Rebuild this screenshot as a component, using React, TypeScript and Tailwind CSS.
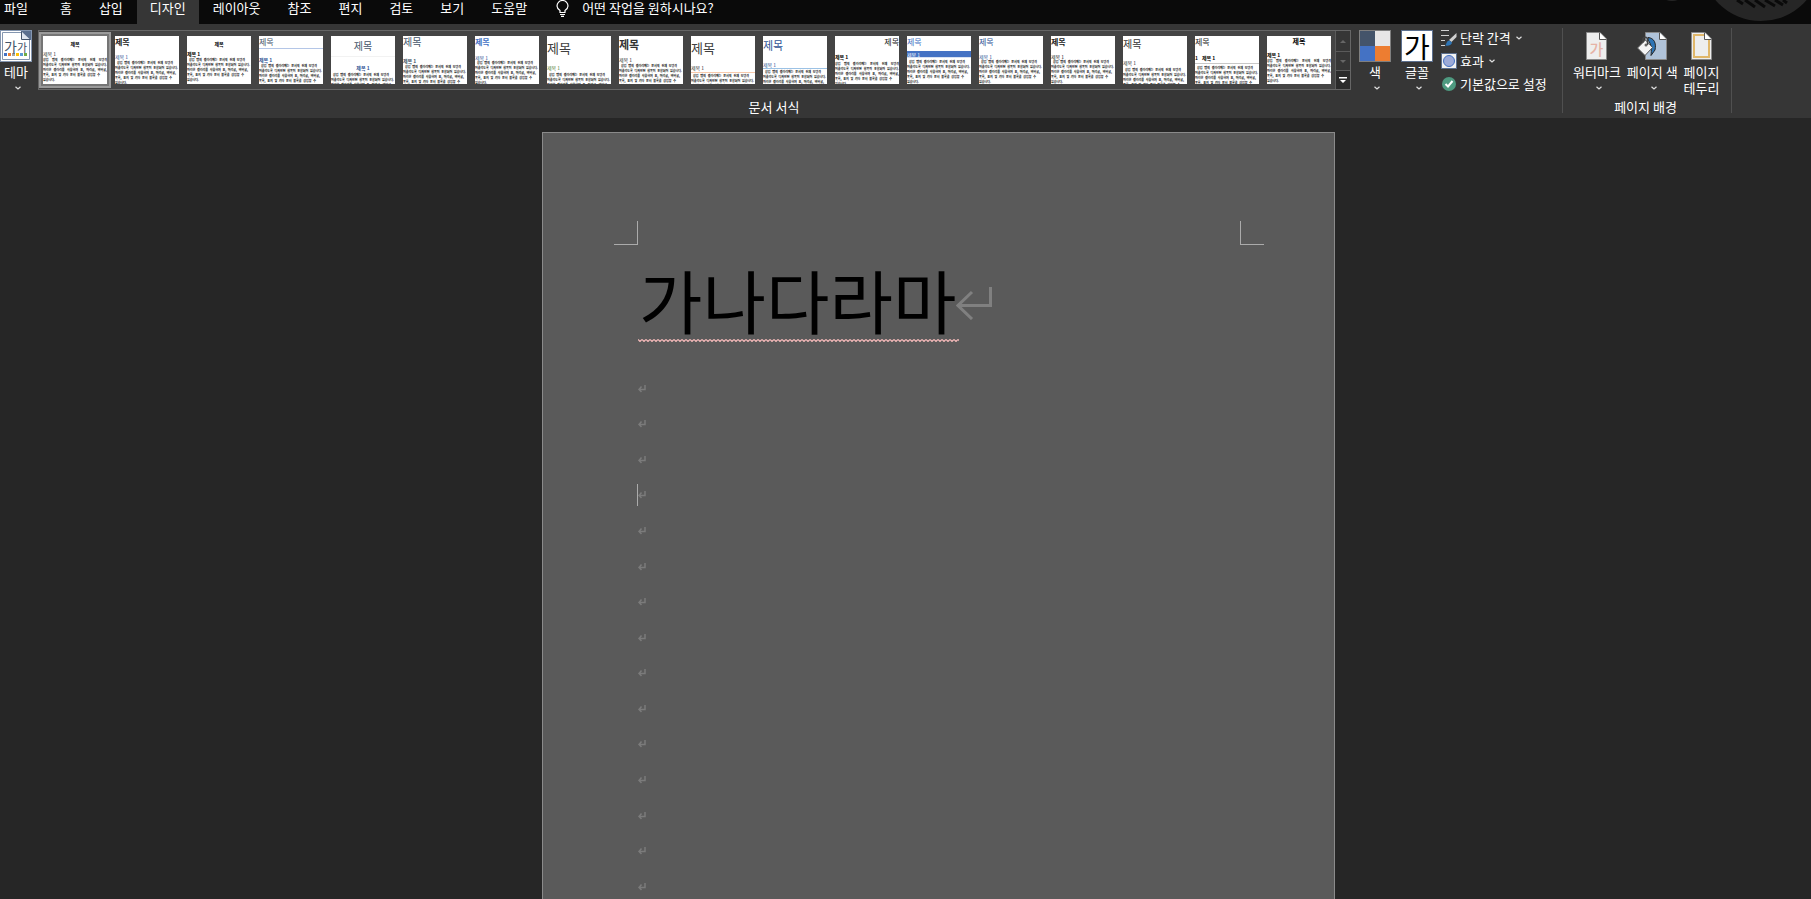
import clsx from "clsx"

const TABS = ["홈", "삽입", "디자인", "레이아웃", "참조", "편지", "검토", "보기", "도움말"]

const BODY = [
  { text: "삽입 탭의 갤러리에는 문서의 전체 모양과", width: "w-[58px] pl-[2px]" },
  { text: "어울리도록 디자인된 항목이 포함되어 있습니다.", width: "w-[63px]" },
  { text: "이러한 갤러리를 사용하여 표, 머리글, 바닥글,", width: "w-[61px]" },
  { text: "목록, 표지 및 기타 문서 블록을 삽입할 수", width: "w-[57px]" },
  { text: "있습니다.", width: "w-[12px]" },
]

type Style = {
  title: string
  heading: string
  body: string
  justify?: boolean
  numbered?: boolean
}

const STYLES: Style[] = [
  { title: "h-[14px] text-[5px] justify-center font-bold text-black", heading: "text-[#333333]", body: "mt-[2px]", justify: true },
  { title: "h-[12px] text-[8px] font-bold text-[#222222]", heading: "mt-[5px] text-[#2f5496]", body: "mt-[2px]" },
  { title: "h-[14px] text-[5px] justify-center font-bold text-black", heading: "font-bold text-black", body: "mt-[2px]" },
  { title: "h-[13px] text-[8px] text-[#44546a] border-b border-[#b4c6e7]", heading: "mt-[7px] font-bold text-[#2f5496]", body: "mt-[2px]" },
  { title: "h-[21px] text-[10px] justify-center text-[#44546a] border-b border-[#f2f2f2]", heading: "mt-[7px] justify-center font-bold text-[#2f5496]", body: "mt-[3px]" },
  { title: "h-[12px] text-[10px] text-[#44546a]", heading: "mt-[9px] font-bold text-[#44546a]", body: "mt-[2px]" },
  { title: "h-[12px] text-[8px] font-bold text-[#4472c4]", heading: "mt-[6px] text-[#2f5496]", body: "mt-px" },
  { title: "h-[22px] text-[13px] text-[#404040]", heading: "mt-[6px] text-[#538135]", body: "mt-[3px]" },
  { title: "h-[16px] text-[11px] font-bold text-[#333333]", heading: "mt-[4px] text-[#333333]", body: "mt-[2px]" },
  { title: "h-[22px] text-[13px] text-[#404040]", heading: "mt-[6px] text-[#333333]", body: "mt-[2px] border-t border-[#f7caac] pt-px" },
  { title: "h-[18px] text-[11px] text-[#2f5496]", heading: "mt-[7px] text-[#2f5496]", body: "mt-px border-t border-[#9cc2e5] pt-px" },
  { title: "h-[12px] text-[8px] justify-end text-[#222222]", heading: "mt-[5px] font-bold text-black", body: "mt-[3px]", justify: true },
  { title: "h-[15px] pb-[3px] text-[8px] text-[#4472c4]", heading: "bg-[#4472c4] text-white", body: "border-t border-[#d9e2f3] pt-[2px]" },
  { title: "h-[11px] text-[8px] text-[#2f5496]", heading: "mt-[6px] text-[#2f5496]", body: "mt-px" },
  { title: "h-[12px] text-[8px] font-bold text-[#222222]", heading: "mt-[5px] text-[#222222]", body: "mt-px" },
  { title: "h-[16px] text-[10px] text-[#333333]", heading: "mt-[7px] text-[#333333]", body: "mt-[3px]" },
  { title: "h-[12px] text-[8px] text-[#222222]", heading: "mt-[6px] font-bold text-black", body: "mt-[3px] border-t border-[#c8c8c8] pt-[2px]", numbered: true },
  { title: "h-[10px] text-[7px] justify-center font-bold text-black", heading: "mt-[5px] font-bold text-black", body: "mt-[2px]", justify: true },
]

function Thumbnail({ style, selected, index }: { style: Style; selected: boolean; index: number }) {
  return (
    <button
      aria-label={`스타일 ${index + 1}`}
      className={clsx(
        "flex h-[56px] w-[72px] shrink-0 items-center justify-center",
        selected && "border-2 border-[#9a9a9a] bg-[#757575]"
      )}
    >
      <span className="flex h-12 w-16 shrink-0 flex-col overflow-hidden bg-white text-left whitespace-nowrap">
        <span className={clsx("flex shrink-0 items-center leading-none", style.title)}>제목</span>
        <span className={clsx("flex h-[6px] shrink-0 items-center gap-1 text-[5px] leading-none", style.heading)}>
          {style.numbered && <span>1</span>}
          <span>제목 1</span>
        </span>
        <span className={clsx("block shrink-0 text-[3px] leading-[5px] font-bold text-black", style.body)}>
          {BODY.map((line, i) => (
            <span
              key={line.text}
              className={clsx("block h-[5px] [text-align-last:justify]", style.justify && i < 3 ? "w-full" : line.width)}
            >
              {line.text}
            </span>
          ))}
        </span>
      </span>
    </button>
  )
}

function Chevron() {
  return (
    <svg width="6" height="4" viewBox="0 0 6 4" fill="none" stroke="#e0e0e0" strokeWidth="1.2">
      <path d="M0.5 0.7 3 3 5.5 0.7" />
    </svg>
  )
}

function ThemeIcon() {
  return (
    <span className="relative block size-8 border border-[#8496b0] bg-white">
      <svg width="30" height="30" viewBox="0 0 30 30">
        <path d="M1.5 1.5H21L28.5 9V28.5H1.5Z" fill="#fff" stroke="#8496b0" />
        <path d="M20 0H30V9H29L20 1Z" fill="#5b6f8e" />
        <path d="M20.5 0.5V8.5H29" fill="#dfe5ee" stroke="#44546a" />
        <rect x="3" y="22" width="3" height="3" fill="#4472c4" />
        <rect x="7" y="22" width="3" height="3" fill="#ed7d31" />
        <rect x="11" y="22" width="3" height="3" fill="#a5a5a5" />
        <rect x="15" y="22" width="3" height="3" fill="#ffc000" />
        <rect x="19" y="22" width="3" height="3" fill="#5b9bd5" />
        <rect x="23" y="22" width="3" height="3" fill="#70ad47" />
      </svg>
      <span className="absolute top-[8px] left-[3px] text-[14px] leading-none text-[#44546a]">가</span>
      <span className="absolute top-[11px] left-[16px] text-[11px] leading-none text-[#44546a]">가</span>
    </span>
  )
}

function WatermarkIcon() {
  return (
    <span className="relative block h-7 w-[21px]">
      <svg width="21" height="28" viewBox="0 0 21 28">
        <path d="M0.5 0.5H14L20.5 7V27.5H0.5Z" fill="#eeeeee" stroke="#8a8a8a" />
        <path d="M13.5 0.5V7.5H20.5" fill="#fff" stroke="#555" />
      </svg>
      <span className="absolute top-[9px] left-[3px] text-[15px] leading-none font-medium text-[#e6b3a6]">가</span>
    </span>
  )
}

function PageColorIcon() {
  return (
    <svg width="30" height="28" viewBox="0 0 30 28">
      <path d="M8.5 0.5H23L29.5 7V27.5H8.5Z" fill="#b0c3d9" stroke="#8a8a8a" />
      <path d="M22.5 0.5V7.5H29.5" fill="#fff" stroke="#555" />
      <path d="M11 5.5C17 6 19.500 11 18 18L14 23.5C14.500 18 15 13 11 8Z" fill="#2e75b6" stroke="#262626" />
      <path d="M0.5 16 8.5 8 15.5 15.5 8 23.5Z" fill="#f4f4f4" stroke="#555" />
      <path d="M6 10.5V6.5Q8 4 10.5 6.5V13" fill="none" stroke="#444" strokeWidth="1.500" />
      <circle cx="9" cy="13" r="1.500" fill="#666" />
    </svg>
  )
}

function PageBorderIcon() {
  return (
    <svg width="21" height="28" viewBox="0 0 21 28">
      <path d="M0.5 0.5H14L20.5 7V27.5H0.5Z" fill="#eeeeee" stroke="#8a8a8a" />
      <path d="M14 3H3V25H18V8" fill="none" stroke="#e0b76a" strokeWidth="2" />
      <path d="M13.5 0.5V7.5H20.5" fill="#fff" stroke="#555" />
    </svg>
  )
}

function SpacingIcon() {
  return (
    <svg width="16" height="16" viewBox="0 0 16 16">
      <path d="M0 0.500H8M0 5.500H8M0 10.500H4M0 15.500H4" stroke="#d0d0d0" />
      <path d="M15.500 3V7L10.500 12 8 10Z" fill="#d0d0d0" />
      <path d="M4 15.500C6 14 5 11 8.500 10.500L11 12.500C11 15 8 16 4 15.500Z" fill="#2e75b6" />
    </svg>
  )
}

function EffectsIcon() {
  return (
    <svg width="16" height="16" viewBox="0 0 16 16">
      <rect x="0.500" y="0.500" width="15" height="15" fill="#f2f2f2" stroke="#5b6f8e" />
      <circle cx="8" cy="8" r="5.500" fill="#9dabd9" stroke="#4472c4" />
    </svg>
  )
}

function DefaultIcon() {
  return (
    <svg width="16" height="16" viewBox="0 0 16 16">
      <circle cx="8" cy="8" r="7" fill="#4e9a80" />
      <path d="M4.500 8 7 10.500 11.500 5" fill="none" stroke="#fff" strokeWidth="2" />
    </svg>
  )
}

function Bulb() {
  return (
    <svg width="13" height="17" viewBox="0 0 13 17" fill="none" stroke="#ffffff" strokeWidth="1.200">
      <path d="M4 12.500V10.500C2 9 1 8 1 6A5.500 5.500 0 0 1 12 6C12 8 11 9 9 10.500V12.500Z" />
      <path d="M4 14.500H9M5 16.300H8" />
    </svg>
  )
}

function TitleBar() {
  return (
    <header className="relative flex h-6 items-stretch overflow-hidden bg-[#0a0a0a]">
      <button className="mr-[6px] pr-[13px] pb-[8px] pl-1 leading-4">파일</button>
      <nav className="flex gap-px">
        {TABS.map((tab) => (
          <button key={tab} className={clsx("px-[13px] pb-[8px] leading-4", tab === "디자인" && "bg-[#363636]")}>
            {tab}
          </button>
        ))}
      </nav>
      <button className="ml-4 flex items-start gap-[13px] leading-4">
        <Bulb />
        <span>어떤 작업을 원하시나요?</span>
      </button>
      <svg className="absolute top-0 right-0" width="160" height="24" viewBox="0 0 160 24">
        <circle cx="21" cy="-15" r="16" fill="#262626" />
        <circle cx="110" cy="-39" r="60" fill="#262626" />
        <path d="M86 0 92 4M94 0 104 7M104 0 114 7M114 0 124 6M124 0 132 5M132 0 136 3" stroke="#0a0a0a" strokeWidth="3" />
      </svg>
    </header>
  )
}

function Gallery() {
  return (
    <div className="flex h-[60px] border border-[#666666] bg-[#444444]">
      <div className="flex items-center">
        {STYLES.map((style, i) => (
          <Thumbnail key={i} style={style} selected={i === 0} index={i} />
        ))}
      </div>
      <div className="grid w-[15px] grid-rows-[21px_19px_1fr] divide-y divide-[#5a5a5a] border-l border-[#5a5a5a] bg-[#363636]">
        <button aria-label="위로" className="flex items-center justify-center">
          <svg width="6" height="3" viewBox="0 0 6 3"><path d="M0 3 3 0 6 3Z" fill="#666" /></svg>
        </button>
        <button aria-label="아래로" className="flex items-center justify-center">
          <svg width="6" height="3" viewBox="0 0 6 3"><path d="M0 0 3 3 6 0Z" fill="#666" /></svg>
        </button>
        <button aria-label="자세히" className="flex items-center justify-center bg-[#2b2b2b]">
          <svg width="8" height="7" viewBox="0 0 8 7"><path d="M0 0H8V1.500H0ZM1 3H7L4 6Z" fill="#fff" /></svg>
        </button>
      </div>
    </div>
  )
}

function Ribbon() {
  return (
    <div className="flex h-[94px] bg-[#363636] pt-1 pb-[5px]">
      <section className="flex shrink-0 flex-col justify-between pt-[2px] pr-[14px]">
        <div className="flex items-start">
          <button className="mr-[6px] flex w-8 flex-col items-center">
            <ThemeIcon />
            <span className="mt-[2px] leading-4">테마</span>
            <span className="mt-[6px] ml-1"><Chevron /></span>
          </button>
          <Gallery />
          <button className="ml-2 flex w-8 flex-col items-center">
            <span className="grid size-8 grid-cols-2 border border-[#7f7f7f]">
              <span className="bg-[#44546a]" />
              <span className="bg-[#e7e6e6]" />
              <span className="bg-[#4472c4]" />
              <span className="bg-[#ed7d31]" />
            </span>
            <span className="mt-[2px] leading-4">색</span>
            <span className="mt-[6px] ml-1"><Chevron /></span>
          </button>
          <button className="ml-[10px] flex w-8 flex-col items-center">
            <span className="flex size-8 items-center justify-center border border-[#5b6f8e] bg-white text-[28px] leading-none text-black">
              가
            </span>
            <span className="mt-[2px] leading-4">글꼴</span>
            <span className="mt-[6px] ml-1"><Chevron /></span>
          </button>
          <div className="ml-2 flex w-[107px] flex-col gap-[7px]">
            <button className="flex items-center gap-[3px] leading-4">
              <SpacingIcon />
              <span className="mr-[2px]">단락 간격</span>
              <Chevron />
            </button>
            <button className="flex items-center gap-[3px] leading-4">
              <EffectsIcon />
              <span className="mr-[2px]">효과</span>
              <Chevron />
            </button>
            <button className="flex items-center gap-[3px] leading-4">
              <DefaultIcon />
              <span className="whitespace-nowrap">기본값으로 설정</span>
            </button>
          </div>
        </div>
        <h2 className="text-center leading-3">문서 서식</h2>
      </section>
      <section className="flex w-[170px] shrink-0 flex-col justify-between border-x border-[#505050] pt-1">
        <div className="flex items-start gap-[6px] pl-[10px]">
          <button className="flex flex-col items-center">
            <WatermarkIcon />
            <span className="mt-1 leading-4">워터마크</span>
            <span className="mt-[6px] ml-1"><Chevron /></span>
          </button>
          <button className="flex flex-col items-center">
            <PageColorIcon />
            <span className="mt-1 leading-4">페이지 색</span>
            <span className="mt-[6px] ml-1"><Chevron /></span>
          </button>
          <button className="flex flex-col items-center">
            <PageBorderIcon />
            <span className="mt-1 leading-4">
              페이지
              <br />
              테두리
            </span>
          </button>
        </div>
        <h2 className="pr-[3px] text-center leading-3">페이지 배경</h2>
      </section>
    </div>
  )
}

function ReturnMark({ large }: { large?: boolean }) {
  if (large) {
    return (
      <svg width="37" height="33" viewBox="0 0 37 33" fill="none" stroke="#808080" strokeWidth="3">
        <path d="M34.500 0V18.500H2M16 5 2 18.500 16 32" />
      </svg>
    )
  }
  return (
    <svg width="8" height="8" viewBox="0 0 8 8" fill="none" stroke="#7b7b7b" strokeWidth="1.500">
      <path d="M7 0V4.500H1M3.500 1.500 1 4.500 3.500 7" />
    </svg>
  )
}

function Squiggle() {
  return (
    <svg width="321" height="3" viewBox="0 0 321 3" className="block">
      <defs>
        <pattern id="wave" width="4" height="3" patternUnits="userSpaceOnUse">
          <path d="M0 0.500 2 2.500 4 0.500" fill="none" stroke="#f4b9b9" strokeWidth="1.200" />
        </pattern>
      </defs>
      <rect width="321" height="3" fill="url(#wave)" />
    </svg>
  )
}

function Page() {
  return (
    <article className="h-[1122px] w-[793px] shrink-0 border border-[#8a8a8a] bg-[#5a5a5a] pt-[88px] pr-[70px] pl-[71px]">
      <div className="flex justify-between">
        <span className="size-6 border-r border-b border-[#ababab]" />
        <span className="size-6 border-b border-l border-[#ababab]" />
      </div>
      <div className="px-6">
        <div className="mt-[14px] flex h-20 items-center">
          <h1 className="pl-px text-[69px] leading-[80px] text-black">가나다라마</h1>
          <span className="pt-2"><ReturnMark large /></span>
        </div>
        <Squiggle />
        <div className="mt-[29px] grid h-[569px] auto-rows-fr">
          {Array.from({ length: 16 }, (_, i) => (
            <p key={i} className="flex items-center">
              <span
                className={clsx("-ml-px flex h-[22px] items-center border-l", i === 3 ? "border-[#ababab]" : "border-transparent")}
              >
                <ReturnMark />
              </span>
            </p>
          ))}
        </div>
      </div>
    </article>
  )
}

export default function App() {
  return (
    <div className="flex h-screen flex-col overflow-hidden bg-[#262626] font-['Noto_Sans_CJK_KR',sans-serif] text-[13px] text-white">
      <TitleBar />
      <Ribbon />
      <main className="flex min-h-0 flex-1 justify-center overflow-hidden pt-[14px] pl-[66px]">
        <Page />
      </main>
    </div>
  )
}
